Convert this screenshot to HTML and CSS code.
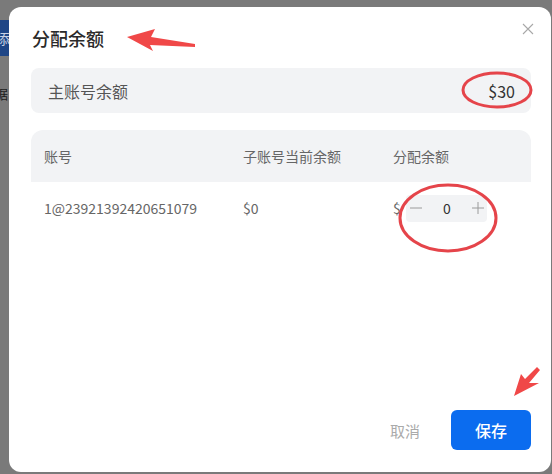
FILE: index.html
```html
<html>
	<head>
		<link rel="stylesheet" href="styles.css">
	</head>
	<body>
		<div class="page">
			<div class="behind">
				<div class="behind-tab">添加</div>
				<div class="behind-text">数据</div>
			</div>
			<div class="dialog">
				<div class="dialog-head">
					<div class="dialog-title">分配余额</div>
					<svg class="close" width="12" height="12" viewBox="0 0 12 12"><path d="M1 1 L11 11 M11 1 L1 11" stroke="#a8a8a8" stroke-width="1.1" fill="none"/></svg>
				</div>
				<div class="balance">
					<span class="balance-label">主账号余额</span>
					<span class="balance-value">$30</span>
				</div>
				<div class="table">
					<div class="row table-head">
						<div class="col col-account">账号</div>
						<div class="col col-current">子账号当前余额</div>
						<div class="col col-assign">分配余额</div>
					</div>
					<div class="row">
						<div class="col col-account">1@23921392420651079</div>
						<div class="col col-current">$0</div>
						<div class="col col-assign">
							<span class="currency">$</span>
							<div class="stepper">
								<svg width="12" height="12" viewBox="0 0 12 12"><path d="M0 6 H12" stroke="#9a9a9a" stroke-width="1"/></svg>
								<span class="step-value">0</span>
								<svg width="12" height="12" viewBox="0 0 12 12"><path d="M0 6 H12 M6 0 V12" stroke="#9a9a9a" stroke-width="1"/></svg>
							</div>
						</div>
					</div>
				</div>
				<div class="dialog-foot">
					<button class="btn-cancel">取消</button>
					<button class="btn-save">保存</button>
				</div>
			</div>
		</div>
		<svg class="marks" width="552" height="474" viewBox="0 0 552 474">
			<polygon points="127,37 155,29 151,37 195,44 195,47 150,45 153,51" fill="#f04848"/>
			<ellipse cx="497" cy="90" rx="34" ry="17" fill="none" stroke="#e5444a" stroke-width="3"/>
			<ellipse cx="448" cy="218" rx="48" ry="33" fill="none" stroke="#e5444a" stroke-width="3"/>
			<polygon points="514,396 521,374 525,379 537,367 540,370 529,383 539,383" fill="#f04848"/>
		</svg>
	</body>
</html>
```

FILE: styles.css
```css
body {
	margin: 0;
	background-color: #7a7a7a;
	font-family: "Noto Sans CJK SC", "Noto Sans", sans-serif;
	color: #333;
	overflow: hidden;
}

.page {
	display: flex;
	height: 474px;
	padding-top: 7px;
	box-sizing: border-box;
}

.behind {
	width: 9px;
	overflow: hidden;
	flex-shrink: 0;
}

.behind-tab {
	margin-top: 13px;
	height: 36px;
	line-height: 36px;
	width: 40px;
	background-color: #1f4686;
	color: #c8d2e4;
	font-size: 14px;
	text-indent: -4px;
}

.behind-text {
	margin-top: 28px;
	font-size: 13px;
	color: #1c1c1c;
	text-indent: -18px;
	white-space: nowrap;
}

.dialog {
	width: 542px;
	height: 465px;
	background-color: #fff;
	border-radius: 12px;
	display: flex;
	flex-direction: column;
	padding: 0 20px 0 22px;
	box-sizing: border-box;
}

.dialog-head {
	height: 61px;
	display: flex;
	justify-content: space-between;
}

.dialog-title {
	padding: 18px 0 0 1px;
	font-size: 18px;
	font-weight: 500;
	line-height: 26px;
	color: #2a2a2a;
}

.close {
	margin-top: 16px;
	margin-right: -3px;
}

.balance {
	height: 45px;
	background-color: #f2f3f5;
	border-radius: 8px;
	display: flex;
	align-items: center;
	justify-content: space-between;
	padding: 0 16px 0 17px;
	font-size: 16px;
	color: #555;
}

.balance-value {
	color: #333;
}

.table {
	margin-top: 17px;
	font-size: 14px;
	color: #666;
}

.row {
	display: flex;
	align-items: center;
	height: 52px;
	padding-left: 13px;
}

.table-head {
	background-color: #f2f3f5;
	border-radius: 12px 12px 0 0;
}

.col-account {
	width: 199px;
}

.col-current {
	width: 150px;
}

.col-assign {
	display: flex;
	align-items: center;
}

.currency {
	width: 13px;
}

.stepper {
	display: flex;
	align-items: center;
	justify-content: space-between;
	width: 81px;
	height: 27px;
	background-color: #f2f3f5;
	border-radius: 4px;
	padding: 0 3px 0 4px;
	box-sizing: border-box;
}

.step-value {
	color: #333;
	font-size: 14px;
}

.dialog-foot {
	margin-top: auto;
	padding-bottom: 22px;
	display: flex;
	justify-content: flex-end;
	align-items: center;
}

button {
	font-family: "Noto Sans CJK SC", "Noto Sans", sans-serif;
	font-size: 15px;
	border: 0;
	cursor: pointer;
}

.btn-cancel {
	background: none;
	color: #aaa;
	margin-right: 31px;
	padding: 0;
}

.btn-save {
	width: 80px;
	height: 40px;
	background-color: #0b6cef;
	color: #fff;
	border-radius: 6px;
	font-size: 16px;
	font-weight: 500;
}

.marks {
	position: absolute;
	left: 0;
	top: 0;
	pointer-events: none;
}
```
